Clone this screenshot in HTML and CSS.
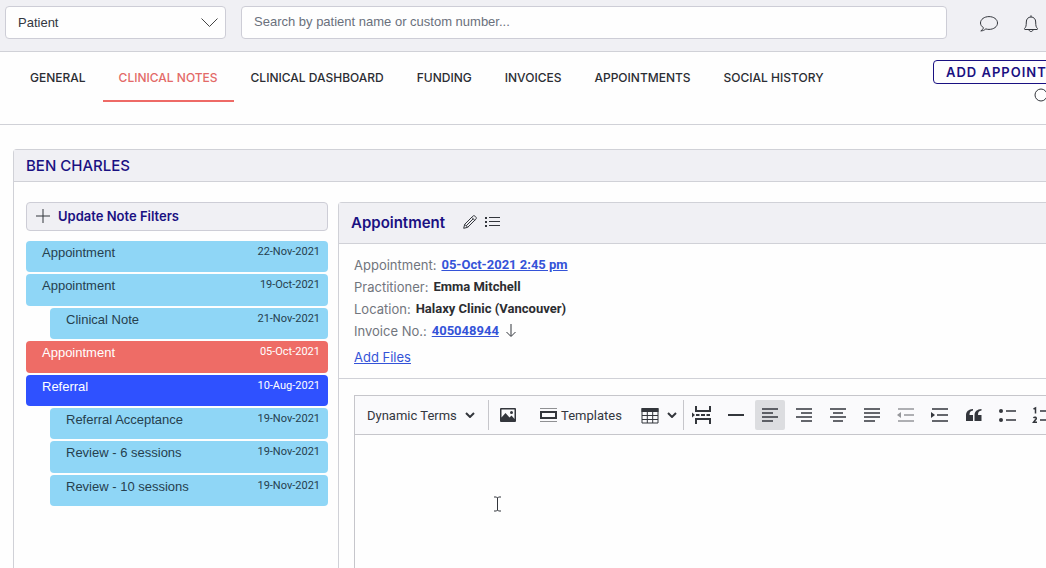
FILE: index.html
```
<!DOCTYPE html>
<html lang="en">
<head>
  <meta charset="UTF-8">
  <meta name="viewport" content="width=device-width, initial-scale=1.0">
  <title>Clinical Notes</title>
  <link rel="stylesheet" href="styles.css">
</head>
<body>
  <div class="app">
    <header class="topbar">
      <select class="search-type" aria-label="Search type">
        <option>Patient</option>
      </select>
      <input class="search-box" type="text" placeholder="Search by patient name or custom number..." aria-label="Search">
      <div class="topbar-actions">
        <button class="icon-button" aria-label="Messages">
          <svg width="20" height="20" viewBox="0 0 20 20"><path d="M4.500 13.700C2.500 12.500 1.500 10.800 1.500 9c0-3.700 3.800-6.400 8.500-6.400s8.500 2.700 8.500 6.400-3.800 6.400-8.500 6.400c-1.200 0-2.200-.2-3.200-.5-1.400 1.200-3 2-5 2 1.400-1 2.400-2 2.700-3.200z"/></svg>
        </button>
        <button class="icon-button" aria-label="Notifications">
          <svg width="16" height="20" viewBox="0 0 16 20"><path d="M2 15.500h12c.6 0 .8-.8.3-1.200C13.200 13.200 12.700 12 12.700 8c0-3-1.900-5-4.700-5S3.300 5 3.300 8c0 4-.5 5.200-1.600 6.300-.5.400-.3 1.200.3 1.200zM6 15.500c0 2.700 4 2.700 4 0M8 3V1.300"/></svg>
        </button>
      </div>
    </header>

    <div class="subnav">
      <nav class="tabs">
        <a class="tab" href="#">GENERAL</a>
        <a class="tab active" href="#">CLINICAL NOTES</a>
        <a class="tab" href="#">CLINICAL DASHBOARD</a>
        <a class="tab" href="#">FUNDING</a>
        <a class="tab" href="#">INVOICES</a>
        <a class="tab" href="#">APPOINTMENTS</a>
        <a class="tab" href="#">SOCIAL HISTORY</a>
      </nav>
      <div class="subnav-actions">
        <button class="add-button">ADD APPOINTMENT</button>
        <button class="icon-button help-button" aria-label="Help">
          <svg width="14" height="14" viewBox="0 0 14 14"><circle cx="7" cy="7" r="6"/></svg>
        </button>
      </div>
    </div>

    <main class="panel">
      <h1 class="panel-title">BEN CHARLES</h1>
      <div class="panel-body">
        <aside class="sidebar">
          <button class="filter-button">
            <svg width="14" height="14" viewBox="0 0 14 14"><path d="M7 0v14M0 7h14"/></svg>
            Update Note Filters
          </button>
          <ul class="notes">
            <li class="note"><span>Appointment</span><time>22-Nov-2021</time></li>
            <li class="note"><span>Appointment</span><time>19-Oct-2021</time></li>
            <li class="note child"><span>Clinical Note</span><time>21-Nov-2021</time></li>
            <li class="note selected"><span>Appointment</span><time>05-Oct-2021</time></li>
            <li class="note referral"><span>Referral</span><time>10-Aug-2021</time></li>
            <li class="note child"><span>Referral Acceptance</span><time>19-Nov-2021</time></li>
            <li class="note child"><span>Review - 6 sessions</span><time>19-Nov-2021</time></li>
            <li class="note child"><span>Review - 10 sessions</span><time>19-Nov-2021</time></li>
          </ul>
        </aside>

        <section class="detail">
          <div class="detail-header">
            <h2>Appointment</h2>
            <button class="icon-button" aria-label="Edit">
              <svg width="14" height="14" viewBox="0 0 14 14"><path d="M.7 13.300l1-4L9.800 1.200c.7-.7 1.500-.7 2.200 0l.8.8c.7.7.7 1.500 0 2.200l-8.100 8.100zM1.700 9.300l3 3M8.700 2.300l3 3M3.200 10.800l7-7"/></svg>
            </button>
            <button class="icon-button" aria-label="List">
              <svg width="15" height="14" viewBox="0 0 15 14"><path d="M4 2.500h11M4 6.500h11M4 10.500h11"/><path class="dots" d="M0 2h2v2H0zM0 6h2v2H0zM0 10h2v2H0z"/></svg>
            </button>
          </div>

          <div class="detail-info">
            <p>Appointment: <a class="strong" href="#">05-Oct-2021 2:45 pm</a></p>
            <p>Practitioner: <strong>Emma Mitchell</strong></p>
            <p>Location: <strong>Halaxy Clinic (Vancouver)</strong></p>
            <p>Invoice No.: <a class="strong" href="#">405048944</a>
              <svg class="download" width="10" height="13" viewBox="0 0 10 13"><path d="M5 0v12M.5 8L5 12.500 9.500 8"/></svg>
            </p>
            <p class="files"><a href="#">Add Files</a></p>
          </div>

          <div class="editor">
            <div class="toolbar">
              <button class="tool terms">Dynamic Terms
                <svg width="10" height="6" viewBox="0 0 10 6"><path d="M1 1l4 4 4-4"/></svg>
              </button>
              <span class="separator"></span>
              <button class="tool image" aria-label="Image">
                <svg width="18" height="16" viewBox="0 0 18 16"><path class="solid" fill-rule="evenodd" d="M2 1h14a1 1 0 0 1 1 1v12a1 1 0 0 1-1 1H2a1 1 0 0 1-1-1V2a1 1 0 0 1 1-1zM2.500 2.500v8L6.500 6l4 4.500 2-2 3 3.500V2.500zM12.500 4a1.500 1.500 0 1 1 0 3 1.500 1.500 0 0 1 0-3z"/></svg>
              </button>
              <button class="tool templates">
                <svg width="17" height="14" viewBox="0 0 17 14"><path class="light" d="M0 .5h17M0 13.500h17"/><path d="M1 4h15v6H1z"/></svg>
                Templates
              </button>
              <button class="tool table" aria-label="Table">
                <svg width="18" height="17" viewBox="0 0 18 17"><path class="thin" d="M1 1.500h16v14.500H1zM1 8.500h16M1 12.500h16M6.300 4v12M11.700 4v12"/><path class="solid" d="M.5 1h17v4H.5z"/></svg>
                <svg width="10" height="6" viewBox="0 0 10 6"><path d="M1 1l4 4 4-4"/></svg>
              </button>
              <span class="separator"></span>
              <div class="tool-group">
                <button class="tool" aria-label="Page break">
                  <svg width="20" height="20" viewBox="0 0 20 20"><path d="M4 1v5h14V1M4 19v-5h14v5M4 10h3.500M9 10h4M14.500 10H18"/><path class="solid" d="M0 7.500L3 10l-3 2.500z"/></svg>
                </button>
                <button class="tool" aria-label="Horizontal line">
                  <svg width="20" height="20" viewBox="0 0 20 20"><path d="M2 10h16"/></svg>
                </button>
                <button class="tool on" aria-label="Align left">
                  <svg width="20" height="20" viewBox="0 0 20 20"><path class="lines" d="M2 4h16M2 8h11M2 12h16M2 16h11"/></svg>
                </button>
                <button class="tool" aria-label="Align right">
                  <svg width="20" height="20" viewBox="0 0 20 20"><path class="lines" d="M2 4h16M7 8h11M2 12h16M7 16h11"/></svg>
                </button>
                <button class="tool" aria-label="Align center">
                  <svg width="20" height="20" viewBox="0 0 20 20"><path class="lines" d="M2 4h16M5 8h10M2 12h16M5 16h10"/></svg>
                </button>
                <button class="tool" aria-label="Justify">
                  <svg width="20" height="20" viewBox="0 0 20 20"><path class="lines" d="M2 4h16M2 8h16M2 12h16M2 16h11"/></svg>
                </button>
                <button class="tool" aria-label="Decrease indent" disabled>
                  <svg width="20" height="20" viewBox="0 0 20 20"><path class="lines" d="M2 4h16M8 10h10M2 16h16"/><path class="solid" d="M5 7v6l-4-3z"/></svg>
                </button>
                <button class="tool" aria-label="Increase indent">
                  <svg width="20" height="20" viewBox="0 0 20 20"><path class="lines" d="M2 4h16M7 10h11M2 16h16"/><path class="solid" d="M1 7v6l4-3z"/></svg>
                </button>
                <button class="tool" aria-label="Quote">
                  <svg width="20" height="20" viewBox="0 0 20 20"><path class="solid" d="M9 5.500C6.500 6 5.500 7 5.500 10H9v6H2v-5.500C2 6.500 4.500 4.300 9 4zM17.500 5.500C15 6 14 7 14 10h3.500v6h-7v-5.500c0-4 2.500-6.200 7-6.500z"/></svg>
                </button>
                <button class="tool" aria-label="Bulleted list">
                  <svg width="20" height="20" viewBox="0 0 20 20"><path class="lines" d="M8 6h10M8 15h10"/><circle class="solid" cx="3" cy="6" r="2"/><circle class="solid" cx="3" cy="15" r="2"/></svg>
                </button>
                <button class="tool" aria-label="Numbered list">
                  <svg width="20" height="20" viewBox="0 0 20 20"><path class="lines" d="M8 6h10M8 15h10"/><path class="lines" d="M1.500 4l2-1v5.500M1.500 13c1-1.500 3.200-.8 2.700.8L1.500 17.300h3.500"/></svg>
                </button>
              </div>
            </div>
            <textarea class="editor-text" aria-label="Note"></textarea>
            <svg class="text-cursor" width="9" height="16" viewBox="0 0 9 16"><path d="M1 1h2.500l1 1 1-1H8M4.500 2v12M1 15h2.500l1-1 1 1H8"/></svg>
          </div>
        </section>
      </div>
    </main>
  </div>
</body>
</html>
```
FILE: styles.css
```
* {
  box-sizing: border-box;
}

body {
  margin: 0;
  overflow: hidden;
  font-family: "Liberation Sans", Arial, sans-serif;
  font-size: 13px;
  color: #333740;
  background: #fefefe;
}

button, input, select, textarea {
  font: inherit;
  color: inherit;
}

button {
  padding: 0;
  border: none;
  background: none;
  cursor: pointer;
}

svg {
  display: block;
  flex: none;
  fill: none;
  stroke: #33363c;
  stroke-width: 1;
}

a {
  color: #3453d8;
}

.app {
  display: flex;
  flex-direction: column;
  min-width: 1180px;
  height: 100vh;
}

/* top bar */
.topbar {
  display: flex;
  flex: none;
  align-items: flex-start;
  height: 52px;
  padding: 6px 0 0 5px;
  background: #f0f0f4;
  border-bottom: 1px solid #d0d1d7;
}

.search-type, .search-box {
  height: 33px;
  padding: 0 12px;
  border: 1px solid #cdcdd6;
  border-radius: 4px;
  background-color: #fefefe;
}

.search-type {
  width: 221px;
  margin-right: 15px;
  appearance: none;
  background-image: url('data:image/svg+xml,<svg xmlns="http://www.w3.org/2000/svg" width="17" height="10" fill="none" stroke="%23444"><path d="M.5 .5l8 8 8-8"/></svg>');
  background-repeat: no-repeat;
  background-position: right 7px top 11px;
}

.search-box {
  flex: 1;
  padding-bottom: 2px;
}

.search-box::placeholder {
  color: #6a707c;
}

.topbar-actions {
  display: flex;
  flex: none;
  gap: 24px;
  width: 233px;
  padding: 8px 0 0 32px;
}

.icon-button {
  flex: none;
}

/* tabs */
.subnav {
  display: flex;
  flex: none;
  height: 73px;
  border-bottom: 1px solid #d0d1d7;
}

.tabs {
  display: flex;
  flex: 1;
  gap: 1px;
  padding-left: 14px;
}

.tab {
  height: 50px;
  padding: 0 16px;
  border-bottom: 2px solid transparent;
  color: #2b2d33;
  font-family: Inter, sans-serif;
  font-size: 12px;
  font-weight: 500;
  line-height: 51px;
  text-decoration: none;
}

.tab.active {
  color: #e36a68;
  border-color: #ee6a66;
}

.subnav-actions {
  width: 247px;
  padding-top: 8px;
}

.add-button {
  display: block;
  height: 24px;
  padding: 0 12px;
  border: 1px solid #1a1182;
  border-radius: 4px;
  color: #1a1182;
  font-family: Inter, sans-serif;
  font-weight: 600;
  letter-spacing: 1px;
}

.help-button {
  display: block;
  margin: 4px 0 0 101px;
}

/* patient panel */
.panel {
  display: flex;
  flex: 1;
  flex-direction: column;
  margin: 24px 13px 0;
  border: 1px solid #d0d1d7;
  border-bottom: none;
  border-radius: 4px 4px 0 0;
}

.panel-title {
  margin: 0;
  padding: 0 12px;
  background: #f0f0f4;
  border-bottom: 1px solid #d0d1d7;
  color: #1a1182;
  font-family: Inter, sans-serif;
  font-size: 15px;
  font-weight: 500;
  line-height: 31px;
}

.panel-body {
  display: flex;
  flex: 1;
  gap: 10px;
  padding: 20px 12px 0;
}

.sidebar {
  flex: none;
  width: 302px;
}

.filter-button {
  display: flex;
  align-items: center;
  gap: 8px;
  width: 100%;
  height: 29px;
  padding: 0 9px 2px;
  background: #f0f0f4;
  border: 1px solid #cdcdd6;
  border-radius: 4px;
  color: #1a1182;
  font-family: Inter, sans-serif;
  font-weight: 600;
}

.notes {
  display: grid;
  grid-auto-rows: 1fr;
  gap: 2px;
  height: 265px;
  margin: 10px 0 0;
  padding: 0;
  list-style: none;
}

.note {
  display: flex;
  justify-content: space-between;
  padding: 2px 8px 0 16px;
  border-radius: 4px;
  background: #8fd6f6;
  color: #26404e;
  line-height: 20px;
}

.note time {
  font-family: Roboto, sans-serif;
  font-size: 11px;
  line-height: 18px;
}

.note.child {
  margin-left: 24px;
}

.note.selected {
  background: #ee6c66;
  color: #fff;
}

.note.referral {
  background: #2f51ff;
  color: #fff;
}

/* note detail */
.detail {
  display: flex;
  flex: 1;
  flex-direction: column;
  border: 1px solid #d0d1d7;
  border-bottom: none;
  border-radius: 4px 4px 0 0;
}

.detail-header {
  display: flex;
  align-items: center;
  gap: 8px;
  height: 41px;
  padding: 0 12px 2px;
  background: #f0f0f4;
  border-bottom: 1px solid #d0d1d7;
}

.detail-header h2 {
  margin: 0 10px 0 0;
  color: #1a1182;
  font-family: Inter, sans-serif;
  font-size: 15px;
  font-weight: 600;
}

.detail-info {
  padding: 10px 15px;
  border-bottom: 1px solid #d0d1d7;
  color: #71757d;
  font-family: Inter, sans-serif;
}

.detail-info p {
  display: flex;
  gap: 5px;
  margin: 0;
  line-height: 22px;
}

.detail-info strong, .strong {
  font-family: Roboto, sans-serif;
  font-weight: 700;
}

.detail-info strong {
  color: #2c2d31;
}

.download {
  margin: 4px 0 0 2px;
}

.detail-info .files {
  margin-top: 4px;
}

/* editor */
.editor {
  position: relative;
  display: flex;
  flex: 1;
  flex-direction: column;
  margin: 16px 15px 0;
  border: 1px solid #c6c6cb;
  border-bottom: none;
}

.toolbar {
  display: flex;
  align-items: center;
  height: 39px;
  background: #fafafc;
  border-bottom: 1px solid #c6c6cb;
}

.tool {
  display: flex;
  align-items: center;
  justify-content: center;
  width: 30px;
  height: 30px;
  border-radius: 2px;
}

.tool svg {
  stroke-width: 2;
}

.tool .lines {
  stroke-width: 1.5;
}

.tool .thin {
  stroke-width: 1;
}

.tool .light {
  stroke: #8f9093;
  stroke-width: 1;
}

.solid, .dots {
  fill: #33363c;
  stroke: none;
}

.tool.on {
  background: #dcdde0;
}

.tool:disabled {
  opacity: .5;
}

.terms, .templates {
  font-family: Roboto, sans-serif;
}

.terms {
  justify-content: flex-start;
  gap: 8px;
  width: 133px;
  padding-left: 12px;
}

.image {
  width: 38px;
}

.templates {
  gap: 4px;
  width: 108px;
}

.table {
  gap: 8px;
  width: 48px;
}

.separator {
  width: 1px;
  height: 30px;
  background: #c6c6cb;
}

.tool-group {
  display: flex;
  gap: 4px;
  padding-left: 3px;
}

.editor-text {
  flex: 1;
  width: 100%;
  border: none;
  outline: none;
  resize: none;
  background: #fefefe;
}

/* mouse pointer over the editing area */
.text-cursor {
  position: absolute;
  top: 100px;
  left: 138px;
}
```
